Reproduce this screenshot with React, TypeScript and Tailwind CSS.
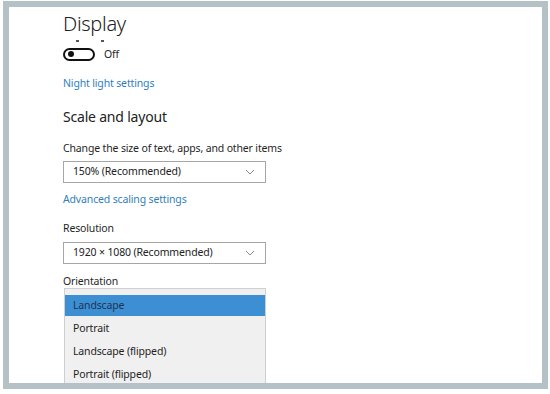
import React from "react";

const font = { fontFamily: '"Noto Sans", "Open Sans", sans-serif' };

function Chevron() {
  return (
    <svg width="10" height="6" viewBox="0 0 10 6" className="shrink-0">
      <path d="M1 1 L5 5 L9 1" fill="none" stroke="#8a8a8a" strokeWidth="1" />
    </svg>
  );
}

function Select({ label }: { label: string }) {
  return (
    <div className="flex h-[22px] w-[203px] items-center justify-between border border-[#a6a6a6] pl-[9px] pr-[10px] text-[10.5px] tracking-[-0.15px] text-[#222]">
      <span>{label}</span>
      <Chevron />
    </div>
  );
}

export default function App() {
  return (
    <div className="h-[394px] w-[550px] overflow-hidden bg-white pl-[3px] pt-[1px]" style={font}>
      <div className="h-[388px] w-[545px] overflow-hidden border-[6px] border-[#b4c1c7] bg-white pl-[54px] text-[10.5px] tracking-[-0.15px] text-[#1f1f1f]">
        <div className="pt-[3px] text-[20px] font-light leading-[28px] tracking-[-0.3px] text-[#222]">Display</div>
        <div className="flex h-[6px] items-center gap-[22px] pl-[13px]">
          <span className="h-[2px] w-[3px] bg-[#555]" />
          <span className="h-[2px] w-[3px] bg-[#555]" />
        </div>
        <div className="mt-[3px] flex items-center gap-[9px]">
          <div className="flex h-[13px] w-[32px] items-center rounded-full border-2 border-[#111] pl-[3px]">
            <span className="h-[6px] w-[6px] rounded-full bg-[#111]" />
          </div>
          <span className="leading-[14px]">Off</span>
        </div>
        <div className="mt-[15px] leading-[14px] text-[#2f7fbd]">Night light settings</div>
        <div className="mt-[17px] text-[14px] leading-[20px] tracking-[-0.2px] text-[#222]">Scale and layout</div>
        <div className="mt-[14px] leading-[14px]">Change the size of text, apps, and other items</div>
        <div className="mt-[6px]">
          <Select label="150% (Recommended)" />
        </div>
        <div className="mt-[9px] leading-[14px] text-[#2f7fbd]">Advanced scaling settings</div>
        <div className="mt-[15px] leading-[14px]">Resolution</div>
        <div className="mt-[7px]">
          <Select label="1920 × 1080 (Recommended)" />
        </div>
        <div className="mt-[10px] leading-[14px]">Orientation</div>
        <div className="ml-[1px] w-[202px] border border-[#cfcfcf] bg-[#f0f0f0] pt-[6px]">
          <div className="flex h-[21px] items-center bg-[#3d8fd3] pl-[8px] text-[#1d3550]">Landscape</div>
          <div className="flex h-[24px] items-center pl-[8px] pt-[2px]">Portrait</div>
          <div className="flex h-[23px] items-center pl-[8px]">Landscape (flipped)</div>
          <div className="flex h-[23px] items-center pl-[8px]">Portrait (flipped)</div>
          <div className="h-[20px]" />
        </div>
      </div>
    </div>
  );
}
